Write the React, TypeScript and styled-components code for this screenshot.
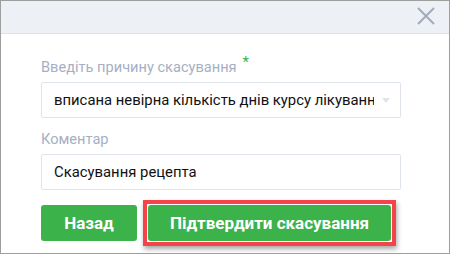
import React from "react";
import styled, { createGlobalStyle } from "styled-components";

const Global = createGlobalStyle`
  html, body { margin: 0; padding: 0; background: #ffffff; }
  body { font-family: Roboto, "Noto Sans", sans-serif; }
  * { box-sizing: border-box; }
`;

const Dialog = styled.div`
  width: 450px;
  height: 254px;
  border: 1px solid #9e9e9e;
  background: #ffffff;
  display: flex;
  flex-direction: column;
  overflow: hidden;
`;

const Header = styled.div`
  height: 33px;
  flex: none;
  background: #edf0f5;
  border-bottom: 1px solid #dde2ea;
  display: flex;
  justify-content: flex-end;
  align-items: flex-start;
  padding: 6px 14px 0 0;
`;

const CloseButton = styled.button`
  width: 18px;
  height: 18px;
  padding: 0;
  border: none;
  background: transparent;
  display: flex;
`;

const Body = styled.div`
  display: flex;
  flex-direction: column;
  padding: 24px 48px 0 40px;
`;

const Label = styled.div<{ $gap: number }>`
  font-size: 14.6px;
  line-height: 18px;
  color: #a6b0c3;
  margin-bottom: ${(p) => p.$gap}px;
  display: flex;
  align-items: flex-start;
`;

const Required = styled.span`
  color: #3cb04a;
  font-size: 15px;
  line-height: 10px;
  margin-left: 6px;
  margin-top: -1px;
`;

const Field = styled.div`
  height: 36px;
  border: 1px solid #dfe4ec;
  border-radius: 2px;
  display: flex;
  align-items: center;
  padding: 0 10px 0 12px;
  font-size: 14.85px;
  color: #111111;
  margin-bottom: 12px;
`;

const FieldText = styled.span`
  flex: 1;
  white-space: nowrap;
  overflow: hidden;
  min-width: 0;
`;

const Caret = styled.span`
  width: 0;
  height: 0;
  border-left: 4px solid transparent;
  border-right: 4px solid transparent;
  border-top: 5px solid #dfe4ec;
  margin-left: 8px;
  flex: none;
`;

const Actions = styled.div`
  display: flex;
  align-items: center;
  gap: 6px;
  margin-top: -2px;
`;

const Button = styled.button<{ $width: number }>`
  width: ${(p) => p.$width}px;
  height: 36px;
  border: none;
  border-radius: 3px;
  background: #3bb24a;
  color: #ffffff;
  font-family: Roboto, "Noto Sans", sans-serif;
  font-weight: 700;
  font-size: 17px;
  padding: 0;
  display: flex;
  align-items: center;
  justify-content: center;
`;

const Highlight = styled.div`
  border: 4px solid #f2444a;
  padding: 1px;
  box-shadow: 1px 3px 5px rgba(0, 0, 0, 0.35);
  display: flex;
`;

export default function App() {
  return (
    <>
      <Global />
      <Dialog>
        <Header>
          <CloseButton aria-label="close">
            <svg width="18" height="18" viewBox="0 0 18 18">
              <path d="M1 1 L17 17 M17 1 L1 17" stroke="#a3abbb" strokeWidth="2" fill="none" />
            </svg>
          </CloseButton>
        </Header>
        <Body>
          <Label $gap={6}>
            Введіть причину скасування<Required>*</Required>
          </Label>
          <Field>
            <FieldText>вписана невірна кількість днів курсу лікування</FieldText>
            <Caret />
          </Field>
          <Label $gap={6}>Коментар</Label>
          <Field>
            <FieldText>Скасування рецепта</FieldText>
          </Field>
          <Actions>
            <Button $width={96}>Назад</Button>
            <Highlight>
              <Button $width={243}>Підтвердити скасування</Button>
            </Highlight>
          </Actions>
        </Body>
      </Dialog>
    </>
  );
}
